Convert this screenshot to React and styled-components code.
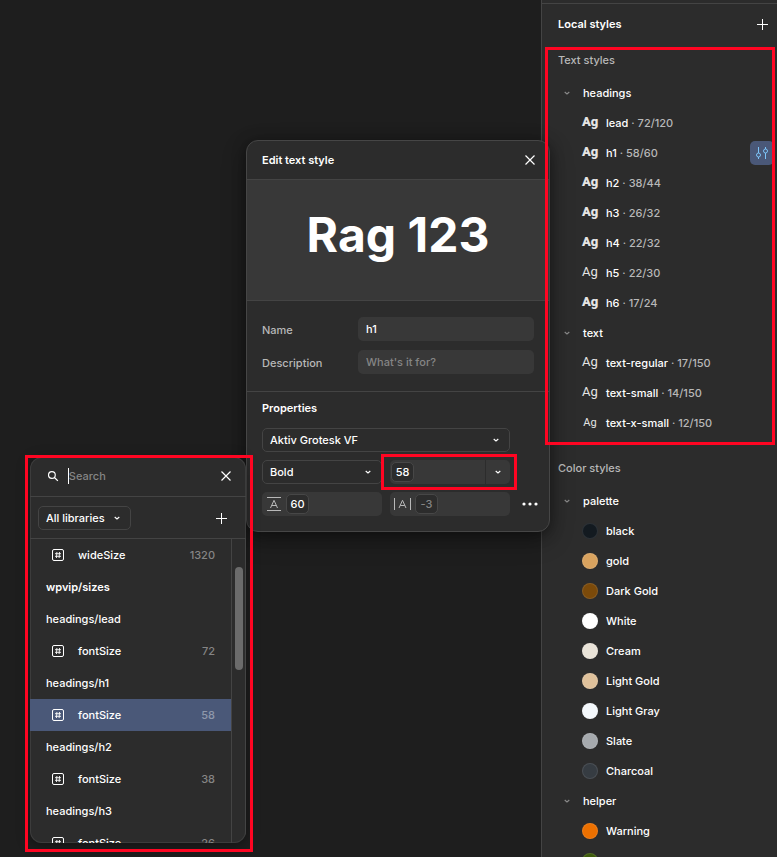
import React from "react";
import styled, { createGlobalStyle, css } from "styled-components";

const GlobalStyle = createGlobalStyle`
  *, *::before, *::after { box-sizing: border-box; }
  body {
    margin: 0;
    background: #1e1e1e;
    color: #fff;
    font: 500 11px/16px Inter, "Liberation Sans", sans-serif;
  }
  button, input, select { font: inherit; color: inherit; }
  h1, h2, h3, p, ul { margin: 0; padding: 0; font: inherit; }
  ul { list-style: none; }
`;

const Workspace = styled.div`
  position: relative;
  display: grid;
  grid-template-columns: 1fr 236px;
  height: 100vh;
  overflow: hidden;
`;

const Canvas = styled.main`
  background: #1e1e1e;
`;

const Highlight = styled.div`
  position: absolute;
  inset: ${(p) => p.$inset};
  border: 3px solid #ff0522;
  z-index: 5;
  pointer-events: none;
`;

const IconButton = styled.button`
  display: flex;
  align-items: center;
  justify-content: center;
  width: 24px;
  height: 24px;
  padding: 0;
  border: 0;
  border-radius: 5px;
  background: ${(p) => (p.$active ? "#4a5878" : "transparent")};
  color: ${(p) => (p.$active ? "#7cc4f8" : "#fff")};
`;

/* Sidebar */

const Sidebar = styled.aside`
  min-width: 0;
  padding-top: 3px;
  overflow: hidden;
  background: #2c2c2c;
  border-left: 1px solid #444;
`;

const SidebarHeader = styled.header`
  display: flex;
  align-items: center;
  justify-content: space-between;
  height: 41px;
  padding: 0 3px 0 16px;
  border-top: 1px solid #444;
`;

const Title = styled.h2`
  font-weight: 600;
`;

const StyleSection = styled.section`
  position: relative;
  padding-bottom: 14px;
`;

const SectionTitle = styled.h3`
  height: 34px;
  padding: 8px 16px;
  color: #b8b8b8;
`;

const GroupToggle = styled.button`
  display: flex;
  align-items: center;
  gap: 12px;
  width: 100%;
  height: 30px;
  padding: 0 21px;
  border: 0;
  background: none;
  svg { color: #8a8a8a; }
`;

const StyleItem = styled.li`
  display: flex;
  align-items: center;
  justify-content: space-between;
  height: 30px;
  padding: 0 3px 0 40px;
`;

const StyleButton = styled.button`
  display: flex;
  align-items: center;
  gap: 8px;
  height: 30px;
  padding: 0;
  border: 0;
  background: none;
`;

const Sample = styled.span`
  width: 16px;
  padding-bottom: ${(p) => (p.$small ? 0 : 2)}px;
  text-align: center;
  font-family: Roboto, "Liberation Sans", sans-serif;
  font-size: ${(p) => (p.$small ? 11 : 13)}px;
  font-weight: ${(p) => (p.$bold ? 900 : 400)};
  color: #e4e4e4;
`;

const Meta = styled.span`
  color: #b8b8b8;
`;

const Swatch = styled.span`
  width: 16px;
  height: 16px;
  border: 1px solid rgba(255, 255, 255, 0.1);
  border-radius: 50%;
  background: ${(p) => p.$color};
  background-origin: border-box;
`;

/* Edit dialog */

const Dialog = styled.section`
  position: absolute;
  left: 246px;
  top: 140px;
  width: 304px;
  z-index: 2;
  border: 1px solid #464646;
  border-radius: 12px;
  background: #2c2c2c;
  box-shadow: 0 2px 14px rgba(0, 0, 0, 0.35), 0 8px 24px rgba(0, 0, 0, 0.3);
`;

const DialogHeader = styled.header`
  display: flex;
  align-items: center;
  justify-content: space-between;
  height: 39px;
  padding: 0 7px 0 15px;
  border-bottom: 1px solid #444;
`;

const Preview = styled.p`
  display: flex;
  align-items: center;
  justify-content: center;
  height: 121px;
  padding-bottom: 10px;
  border-bottom: 1px solid #444;
  background: #383838;
  font: 700 48px/60px Inter, "Liberation Sans", sans-serif;
`;

const Details = styled.div`
  display: grid;
  gap: 9px;
  padding: 16px 15px 17px;
  border-bottom: 1px solid #444;
`;

const Field = styled.label`
  display: grid;
  grid-template-columns: 96px 1fr;
  align-items: center;
  color: #b8b8b8;
`;

const FieldName = styled.span`
  padding-top: 2px;
`;

const TextInput = styled.input`
  width: 100%;
  min-width: 0;
  height: 24px;
  padding: 0 8px;
  border: 0;
  border-radius: 5px;
  outline: 0;
  background: #383838;
  color: #fff;
  &::placeholder { color: #858585; opacity: 1; }
`;

const Properties = styled.div`
  padding: 8px 7px 15px 15px;
`;

const PropertyGrid = styled.div`
  display: grid;
  grid-template-columns: 1fr 1fr 24px;
  gap: 8px;
  margin-top: 12px;
`;

const SelectBox = styled.div`
  display: grid;
  align-items: center;
  grid-column: ${(p) => (p.$wide ? "span 2" : "auto")};
  width: ${(p) => p.$width || "auto"};
  height: 24px;
  border: 1px solid #444;
  border-radius: 5px;
  svg {
    grid-area: 1 / 1;
    justify-self: end;
    margin-right: 9px;
    pointer-events: none;
  }
`;

const Select = styled.select`
  grid-area: 1 / 1;
  appearance: none;
  width: 100%;
  height: 22px;
  padding: 0 24px 0 7px;
  border: 0;
  outline: 0;
  background: transparent;
  option { background: #2c2c2c; }
`;

const ValueBox = styled.div`
  display: flex;
  align-items: center;
  height: 24px;
  padding-left: ${(p) => (p.$labelled ? 4 : 1)}px;
  grid-column: ${(p) => (p.$first ? "1" : "2")};
  border-radius: 5px;
  background: #383838;
  position: relative;
`;

const ValueLabel = styled.label`
  display: flex;
  align-items: center;
  gap: 4px;
  flex: 1;
  svg { color: #b8b8b8; }
`;

const ValueChip = styled.input`
  width: 23px;
  height: 20px;
  padding: 0;
  border: 1px solid #474747;
  border-radius: 5px;
  outline: 0;
  background: #2c2c2c;
  color: ${(p) => (p.$muted ? "#858585" : "#fff")};
  text-align: center;
`;

const PresetButton = styled(IconButton)`
  width: 25px;
  border-left: 1px solid #2c2c2c;
  border-radius: 0 5px 5px 0;
`;

/* Variable picker */

const PickerFrame = styled.section`
  position: absolute;
  left: 30px;
  top: 457px;
  width: 216px;
  z-index: 3;
`;

const Picker = styled.div`
  overflow: hidden;
  border-radius: 12px;
  background: #2c2c2c;
  box-shadow: inset 0 0 0 1px #3c3c3c, 0 2px 14px rgba(0, 0, 0, 0.4);
`;

const SearchBar = styled.header`
  display: flex;
  align-items: center;
  height: 40px;
  padding: 0 8px 2px 12px;
  border-bottom: 1px solid #444;
`;

const SearchField = styled.label`
  display: flex;
  align-items: center;
  flex: 1;
  min-width: 0;
  gap: 8px;
  padding: 0 4px;
`;

const SearchInput = styled.input`
  width: 100%;
  min-width: 0;
  height: 16px;
  padding: 0;
  border: 0;
  border-left: 1px solid #fff;
  outline: 0;
  background: none;
  &::placeholder { color: #858585; opacity: 1; }
`;

const FilterBar = styled.div`
  display: flex;
  align-items: center;
  justify-content: space-between;
  height: 42px;
  padding: 0 13px 0 8px;
  border-bottom: 1px solid #444;
`;

const PickerBody = styled.div`
  display: flex;
  height: 304px;
`;

const VariableList = styled.ul`
  flex: 1;
  overflow: hidden;
`;

const rowBase = css`
  display: flex;
  align-items: center;
  height: 32px;
`;

const GroupRow = styled.li`
  ${rowBase}
  padding: 0 16px;
  font-weight: ${(p) => (p.$strong ? 600 : 500)};
`;

const VariableRow = styled.button`
  ${rowBase}
  gap: 14px;
  width: 100%;
  padding: 0 16px 0 22px;
  border: 0;
  background: ${(p) => (p.$selected ? "#4a5878" : "none")};
  text-align: left;
`;

const VariableName = styled.span`
  flex: 1;
`;

const VariableValue = styled.span`
  color: ${(p) => (p.$selected ? "#8f98ab" : "#858585")};
`;

const ScrollTrack = styled.div`
  width: 15px;
  padding: 28px 2px 0 3px;
  border-left: 1px solid #444;
  border-right: 1px solid #444;
`;

const ScrollThumb = styled.div`
  width: 8px;
  height: 103px;
  border-radius: 4px;
  background: #6b6b6b;
`;

/* Icons */

const Icon = ({ w = 16, h = 16, children }) => (
  <svg width={w} height={h} viewBox={`0 0 ${w} ${h}`} fill="none" stroke="currentColor" aria-hidden="true">
    {children}
  </svg>
);
const Plus = () => <Icon><path d="M8.5 3v11M3 8.5h11" /></Icon>;
const Close = () => <Icon><path d="M3.5 3.5l9 9M12.5 3.5l-9 9" strokeWidth="1.2" /></Icon>;
const Chevron = () => <Icon w={8} h={8}><path d="M1.7 3L4 5 6.3 3" strokeWidth="1.1" /></Icon>;
const Sliders = () => (
  <Icon>
    <path d="M4.5 2v6M4.5 12v2M11.5 2v2M11.5 8v6" />
    <circle cx="4.5" cy="10" r="2" />
    <circle cx="11.5" cy="6" r="2" />
  </Icon>
);
const SearchIcon = () => (
  <Icon><circle cx="6.8" cy="6.8" r="3.9" strokeWidth="1.3" /><path d="M9.7 9.7l4 4" strokeWidth="1.4" /></Icon>
);
const NumberIcon = () => (
  <Icon w={12} h={12}>
    <rect x="0.5" y="0.5" width="11" height="11" rx="1.5" />
    <path d="M3 4.7h6M3 7.3h6M4.9 3L4.5 9M7.5 3L7.1 9" strokeWidth="0.9" />
  </Icon>
);
const LineHeightIcon = () => (
  <Icon><path d="M1 1.5h14M1 14.5h14M4.5 12L8 4.3l3.5 7.7M5.7 9.5h4.6" /></Icon>
);
const SpacingIcon = () => (
  <Icon w={17}><path d="M0.5 2v12M16.5 2v12M5 12l3.5-7.7L12 12M6.2 9.5h4.6" /></Icon>
);
const More = () => (
  <Icon>
    <g fill="currentColor" stroke="none">
      <circle cx="2" cy="8" r="1.6" /><circle cx="8" cy="8" r="1.6" /><circle cx="14" cy="8" r="1.6" />
    </g>
  </Icon>
);

const headings = [
  { name: "lead", meta: "72/120", bold: true },
  { name: "h1", meta: "58/60", bold: true, active: true },
  { name: "h2", meta: "38/44", bold: true },
  { name: "h3", meta: "26/32", bold: true },
  { name: "h4", meta: "22/32", bold: true },
  { name: "h5", meta: "22/30" },
  { name: "h6", meta: "17/24", bold: true },
];
const textStyles = [
  { name: "text-regular", meta: "17/150" },
  { name: "text-small", meta: "14/150" },
  { name: "text-x-small", meta: "12/150", small: true },
];
const palette = [
  ["black", "#131a20"],
  ["gold", "#d9a35f"],
  ["Dark Gold", "#7b4a0a"],
  ["White", "#ffffff"],
  ["Cream", "#e9e3d8"],
  ["Light Gold", "#dfc19b"],
  ["Light Gray", "#f4f8fc"],
  ["Slate", "#a6aaae"],
  ["Charcoal", "#363c42"],
];
const helpers = [
  ["Warning", "#ec7000"],
  ["Success", "#3f5c0c"],
];
const variables = [
  { name: "wideSize", value: 1320 },
  { group: "wpvip/sizes", strong: true },
  { group: "headings/lead" },
  { name: "fontSize", value: 72 },
  { group: "headings/h1" },
  { name: "fontSize", value: 58, selected: true },
  { group: "headings/h2" },
  { name: "fontSize", value: 38 },
  { group: "headings/h3" },
  { name: "fontSize", value: 26 },
];

const Group = ({ name, children }) => (
  <div>
    <GroupToggle type="button" aria-expanded="true"><Chevron />{name}</GroupToggle>
    <ul>{children}</ul>
  </div>
);

const TextStyle = ({ name, meta, bold, small, active }) => (
  <StyleItem>
    <StyleButton type="button">
      <Sample $bold={bold} $small={small}>Ag</Sample>
      <span>{name} <Meta>· {meta}</Meta></span>
    </StyleButton>
    {active && <IconButton type="button" $active aria-label="Edit style"><Sliders /></IconButton>}
  </StyleItem>
);

const ColorStyle = ({ name, color }) => (
  <StyleItem>
    <StyleButton type="button"><Swatch $color={color} />{name}</StyleButton>
  </StyleItem>
);

const Dropdown = ({ label, value, wide, width }) => (
  <SelectBox $wide={wide} $width={width}>
    <Select aria-label={label} defaultValue={value}><option>{value}</option></Select>
    <Chevron />
  </SelectBox>
);

const StylesSidebar = () => (
  <Sidebar>
    <SidebarHeader>
      <Title>Local styles</Title>
      <IconButton type="button" aria-label="Create style"><Plus /></IconButton>
    </SidebarHeader>
    <StyleSection>
      <SectionTitle>Text styles</SectionTitle>
      <Group name="headings">{headings.map((s) => <TextStyle key={s.name} {...s} />)}</Group>
      <Group name="text">{textStyles.map((s) => <TextStyle key={s.name} {...s} />)}</Group>
      <Highlight $inset="3px 2px 7px 3px" />
    </StyleSection>
    <StyleSection>
      <SectionTitle>Color styles</SectionTitle>
      <Group name="palette">{palette.map(([n, c]) => <ColorStyle key={n} name={n} color={c} />)}</Group>
      <Group name="helper">{helpers.map(([n, c]) => <ColorStyle key={n} name={n} color={c} />)}</Group>
    </StyleSection>
  </Sidebar>
);

const EditDialog = () => (
  <Dialog role="dialog" aria-label="Edit text style">
    <DialogHeader>
      <Title>Edit text style</Title>
      <IconButton type="button" aria-label="Close"><Close /></IconButton>
    </DialogHeader>
    <Preview>Rag 123</Preview>
    <Details>
      <Field><FieldName>Name</FieldName><TextInput defaultValue="h1" /></Field>
      <Field><FieldName>Description</FieldName><TextInput placeholder="What's it for?" /></Field>
    </Details>
    <Properties>
      <Title>Properties</Title>
      <PropertyGrid>
        <Dropdown label="Font family" value="Aktiv Grotesk VF" wide />
        <span />
        <Dropdown label="Font weight" value="Bold" />
        <ValueBox>
          <ValueLabel><ValueChip aria-label="Font size" defaultValue="58" /></ValueLabel>
          <PresetButton type="button" aria-label="Font size presets"><Chevron /></PresetButton>
          <Highlight $inset="-6px -7px -6px -9px" />
        </ValueBox>
        <span />
        <ValueBox $first $labelled>
          <ValueLabel><LineHeightIcon /><ValueChip aria-label="Line height" defaultValue="60" /></ValueLabel>
        </ValueBox>
        <ValueBox $labelled>
          <ValueLabel><SpacingIcon /><ValueChip $muted aria-label="Letter spacing" defaultValue="-3" /></ValueLabel>
        </ValueBox>
        <IconButton type="button" aria-label="More options"><More /></IconButton>
      </PropertyGrid>
    </Properties>
  </Dialog>
);

const VariablePicker = () => (
  <PickerFrame aria-label="Variables">
    <Picker>
      <SearchBar>
        <SearchField><SearchIcon /><SearchInput aria-label="Search variables" placeholder="Search" /></SearchField>
        <IconButton type="button" aria-label="Close"><Close /></IconButton>
      </SearchBar>
      <FilterBar>
        <Dropdown label="Library" value="All libraries" width="93px" />
        <IconButton type="button" aria-label="Create variable"><Plus /></IconButton>
      </FilterBar>
      <PickerBody>
        <VariableList>
          {variables.map((v, i) =>
            v.group ? (
              <GroupRow key={i} $strong={v.strong}>{v.group}</GroupRow>
            ) : (
              <li key={i}>
                <VariableRow type="button" $selected={v.selected}>
                  <NumberIcon />
                  <VariableName>{v.name}</VariableName>
                  <VariableValue $selected={v.selected}>{v.value}</VariableValue>
                </VariableRow>
              </li>
            )
          )}
        </VariableList>
        <ScrollTrack><ScrollThumb /></ScrollTrack>
      </PickerBody>
    </Picker>
    <Highlight $inset="-2px -7px -9px -5px" />
  </PickerFrame>
);

export default function App() {
  return (
    <>
      <GlobalStyle />
      <Workspace>
        <Canvas />
        <StylesSidebar />
        <EditDialog />
        <VariablePicker />
      </Workspace>
    </>
  );
}
